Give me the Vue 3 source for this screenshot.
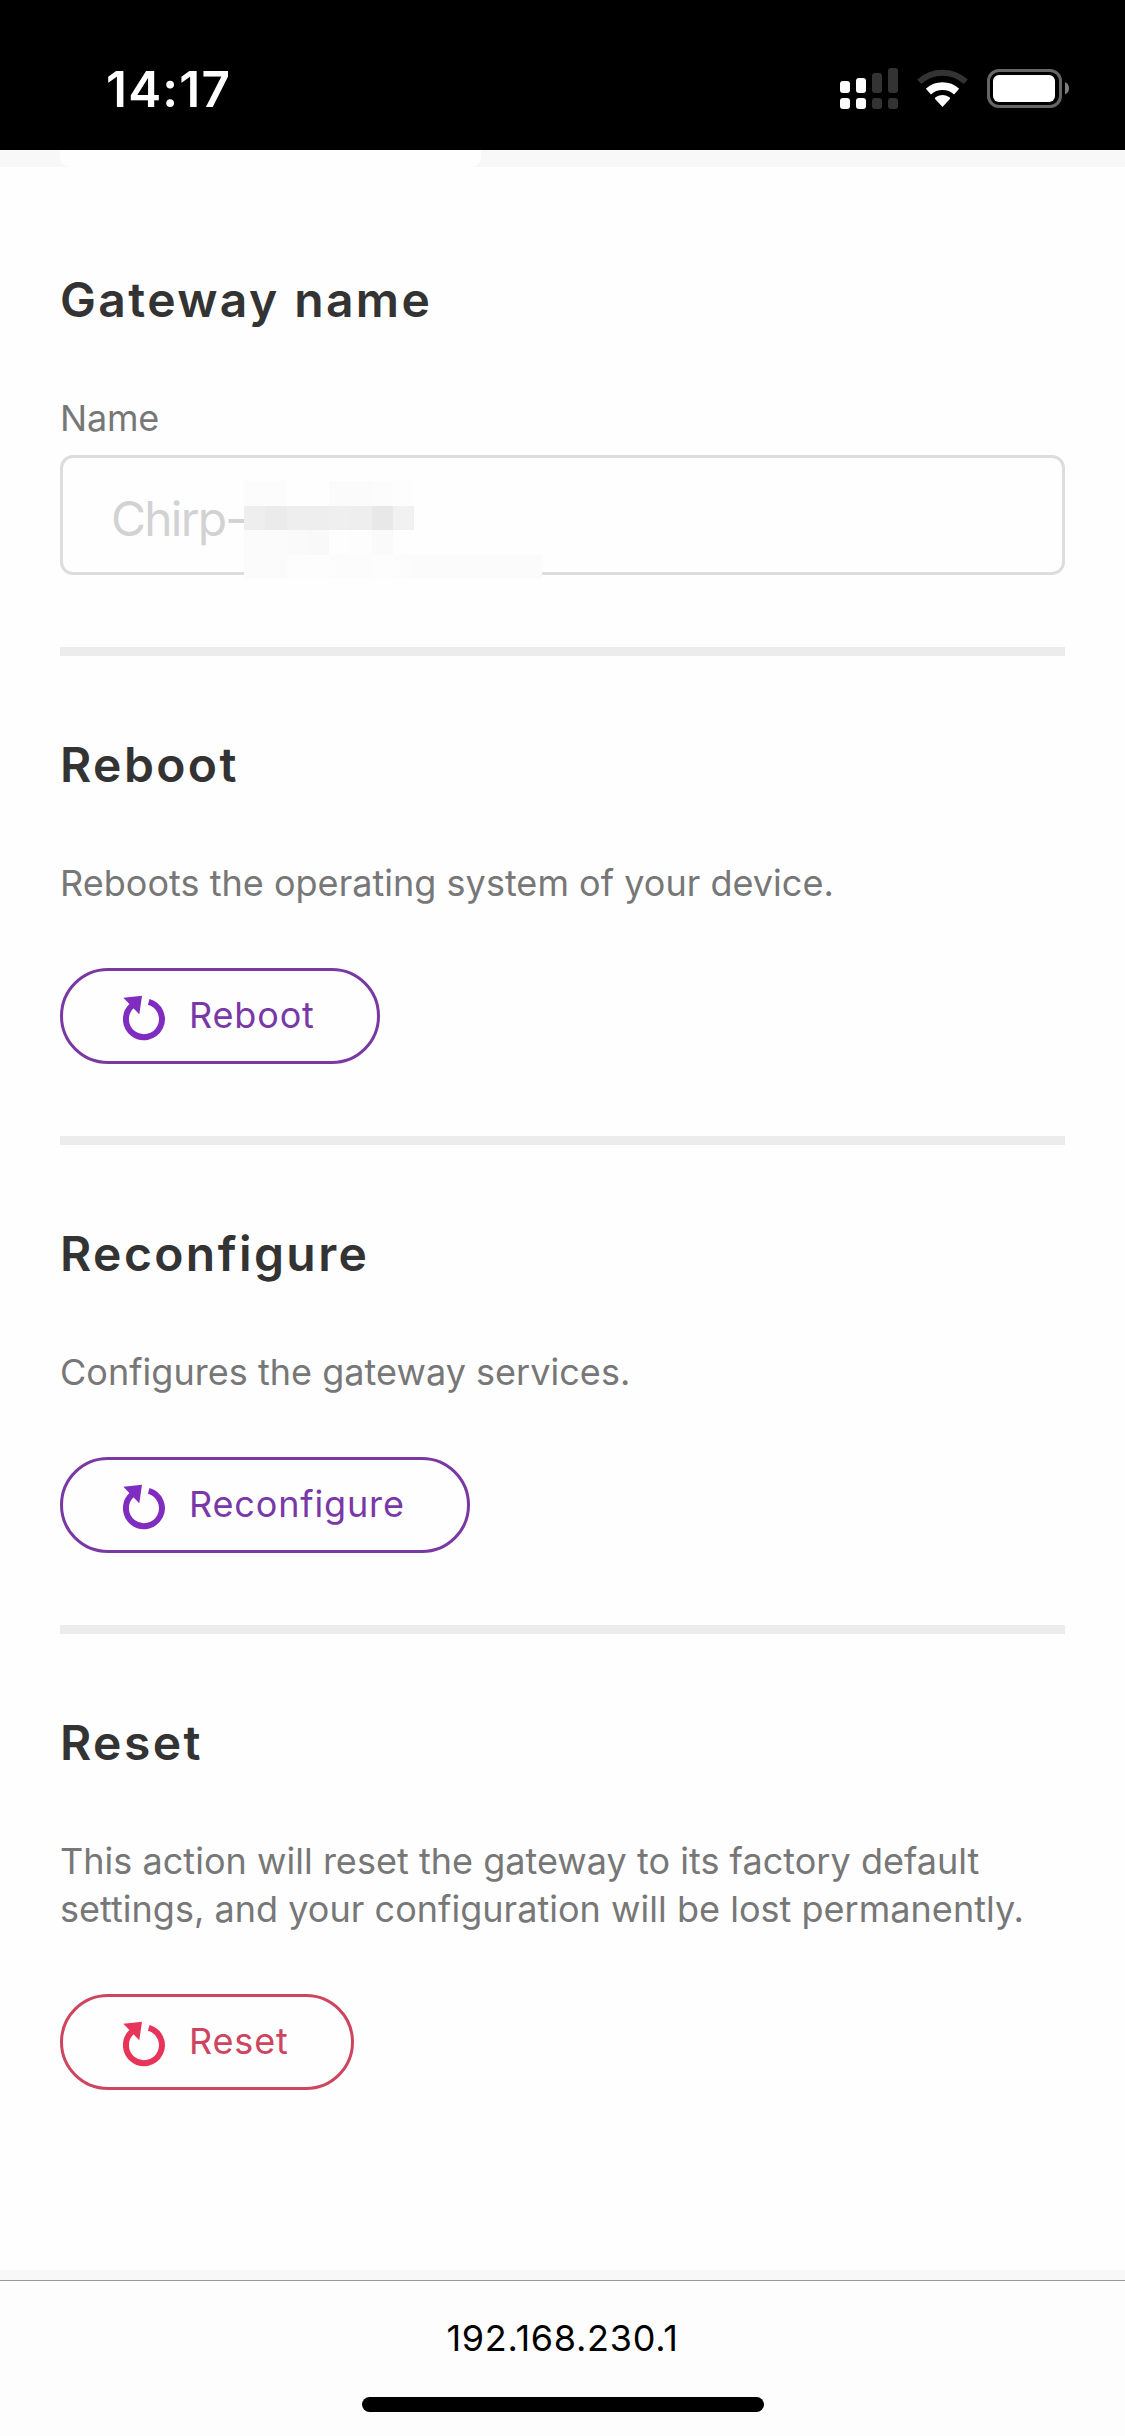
<script setup>
const actions = [
  { title: 'Reboot', text: 'Reboots the operating system of your device.', tone: 'purple' },
  { title: 'Reconfigure', text: 'Configures the gateway services.', tone: 'purple' },
  {
    title: 'Reset',
    text: 'This action will reset the gateway to its factory default settings, and your configuration will be lost permanently.',
    tone: 'red',
  },
]

// Shades of the mask that hides the gateway identifier, row by row
const mask = [
  ['#fcfcfc', '#fcfcfc', '#fefefe', '#fefefe', '#fbfbfb', '#fbfbfb', '#fcfcfc', '#fdfdfd'],
  ['#eeeeee', '#ebebeb', '#eeeeee', '#eeeeee', '#efefef', '#eeeeee', '#e8e8e8', '#f1f1f1'],
  ['#fbfbfb', '#fbfbfb', '#fafafa', '#f9f9f9', '#fefefe', '#fdfdfd', '#fafafa', '#fefefe'],
  ['#fbfbfb', '#fbfbfb', '#fdfdfd', '#fdfdfd', '#fcfcfc', '#fcfcfc', '#fdfdfd', '#fcfcfc',
    '#fbfbfb', '#fbfbfb', '#fbfbfb', '#fbfbfb', '#fbfbfb', '#fbfbfb'],
]
</script>

<template>
  <div class="screen">
    <header class="status">
      <span class="time">14:17</span>
      <div class="indicators">
        <svg class="signal" width="58" height="41" viewBox="0 0 58 41">
          <g fill="#fff">
            <rect x="0" y="13" width="10" height="12" rx="3" />
            <rect x="16" y="10" width="10" height="15" rx="3" />
            <rect x="0" y="30" width="10" height="11" rx="3" />
            <rect x="16" y="30" width="10" height="11" rx="3" />
          </g>
          <g fill="#333">
            <rect x="32" y="5" width="10" height="20" rx="3" />
            <rect x="48" y="0" width="10" height="25" rx="3" />
            <rect x="32" y="30" width="10" height="11" rx="3" />
            <rect x="48" y="30" width="10" height="11" rx="3" />
          </g>
        </svg>
        <svg class="wifi" width="51" height="39" viewBox="-25.5 -38 51 39">
          <path d="M-23.3-25.2A34.4 34.4 0 0 1 23.3-25.2" fill="none" stroke="#333" stroke-width="6" />
          <path d="M-14.1-15.4A20.9 20.9 0 0 1 14.1-15.4" fill="none" stroke="#fff" stroke-width="7.6" />
          <path d="M0 0L-7.6-8.2Q-7.6-9.2-6.6-9.9A12.3 12.3 0 0 1 6.6-9.9Q7.6-9.2 7.6-8.2Z" fill="#fff" />
        </svg>
        <svg class="battery" width="82" height="39" viewBox="0 0 82 39">
          <rect x="1.5" y="1.5" width="72" height="36" rx="10.5" fill="none" stroke="#666" stroke-width="3" />
          <rect x="6" y="6" width="62" height="27" rx="6" fill="#fff" />
          <path d="M78 13Q82 15 82 19.200T78 25.500Z" fill="#7f7f7f" />
        </svg>
      </div>
    </header>

    <div class="tabs"><div class="tab"></div></div>

    <main>
      <section class="first">
        <h2>Gateway name</h2>
        <label for="name">Name</label>
        <div class="field">
          <input id="name" type="text" placeholder="Chirp-" />
          <div class="mask">
            <div v-for="(row, r) in mask" :key="r" class="mask-row">
              <i v-for="(shade, c) in row" :key="c" :style="{ background: shade }"></i>
            </div>
          </div>
        </div>
      </section>

      <section v-for="a in actions" :key="a.title">
        <h2>{{ a.title }}</h2>
        <p>{{ a.text }}</p>
        <button :class="a.tone">
          <svg width="43" height="46" viewBox="23 25 43 46">
            <path d="M48.700 31.800A18 18 0 1 1 32.200 35.500" fill="none" stroke="currentColor" stroke-width="6" />
            <path d="M23.300 27.700L42 25.700L39.300 44.300Z" fill="currentColor" />
          </svg>
          <span>{{ a.title }}</span>
        </button>
      </section>
    </main>

    <div class="strip"></div>
    <footer>
      <span class="address">192.168.230.1</span>
      <div class="home"></div>
    </footer>
  </div>
</template>

<style>
body {
  margin: 0;
}
</style>

<style scoped>
.screen {
  display: flex;
  flex-direction: column;
  width: 1125px;
  height: 2436px;
  overflow: hidden;
  box-sizing: border-box;
  background: #fefefe;
  font-family: Inter, "Liberation Sans", sans-serif;
}
.status {
  display: flex;
  flex: none;
  justify-content: space-between;
  height: 150px;
  padding: 0 56px 0 106px;
  box-sizing: border-box;
  background: #000;
  color: #fff;
}
.time {
  padding-top: 59px;
  font-size: 49.5px;
  line-height: 60px;
  font-weight: 600;
  letter-spacing: 1.2px;
}
.indicators {
  display: flex;
  align-items: flex-start;
  padding-top: 68px;
}
.wifi {
  margin: 1px 0 0 19px;
}
.battery {
  margin: 1px 0 0 19px;
}
.tabs {
  flex: none;
  height: 17px;
  padding-left: 60px;
  background: #f8f8f8;
}
.tab {
  width: 421px;
  height: 17px;
  border-radius: 0 0 10px 10px;
  background: #fefefe;
}
main {
  flex: 1;
  padding: 0 60px;
}
section {
  border-top: 9px solid #ececec;
  padding-top: 79px;
  height: 401px;
}
section.first {
  border-top: 0;
  padding-top: 103px;
  height: 377px;
}
h2 {
  margin: 0;
  font-size: 48px;
  line-height: 60px;
  font-weight: 600;
  letter-spacing: 2.4px;
  color: #333;
}
label {
  display: block;
  margin-top: 64px;
  font-size: 36px;
  line-height: 48px;
  letter-spacing: -0.2px;
  color: #777;
}
.field {
  position: relative;
  margin-top: 13px;
}
input {
  display: block;
  width: 100%;
  height: 120px;
  box-sizing: border-box;
  padding: 7px 48px 0;
  border: 3px solid #ddd;
  border-radius: 13px;
  outline: 0;
  background: #fefefe;
  font: 400 48px/56px Inter, "Liberation Sans", sans-serif;
  letter-spacing: -1.8px;
}
input::placeholder {
  color: #d2d2d2;
  opacity: 1;
}
.mask {
  position: absolute;
  left: 184px;
  top: 26px;
}
.mask-row {
  display: flex;
  height: 24.5px;
}
.mask-row i {
  width: 21.3px;
}
p {
  margin: 64px 0 0;
  font-size: 36px;
  line-height: 48px;
  letter-spacing: 0.03px;
  color: #777;
}
button {
  display: flex;
  align-items: center;
  height: 96px;
  margin: 61px 0 0;
  padding: 0 62px 0 60px;
  box-sizing: border-box;
  border: 3px solid #7938a2;
  border-radius: 48px;
  background: transparent;
  color: #7938a8;
  font: 400 36px/48px Inter, "Liberation Sans", sans-serif;
  letter-spacing: 0.85px;
}
button svg {
  margin-top: 3px;
  color: #802cc0;
}
button span {
  margin: 0 0 2px 23px;
}
.red {
  border-color: #cd455e;
  color: #cd455e;
}
.red svg {
  color: #e93459;
}
.strip {
  flex: none;
  height: 10px;
  background: #f8f8f8;
}
footer {
  display: flex;
  flex: none;
  flex-direction: column;
  align-items: center;
  height: 156px;
  box-sizing: border-box;
  border-top: 1px solid #999;
  background: #fdfdfd;
}
.address {
  margin-top: 33px;
  font-size: 36px;
  line-height: 48px;
  letter-spacing: 0.7px;
  color: #000;
}
.home {
  width: 402px;
  height: 15px;
  margin-top: 35px;
  border-radius: 8px;
  background: #000;
}
</style>
